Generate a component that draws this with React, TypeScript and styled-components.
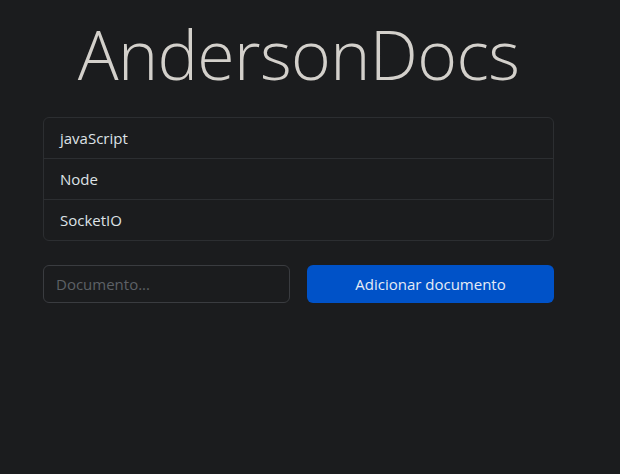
import React from 'react';
import styled, { createGlobalStyle } from 'styled-components';

const GlobalStyle = createGlobalStyle`
  html, body {
    margin: 0;
    padding: 0;
    background: #1b1c1e;
    color: #dee2e6;
    font-family: "Open Sans", "Noto Sans", sans-serif;
    font-size: 16px;
  }
`;

const Page = styled.main`
  width: 511px;
  margin-left: 43px;
  padding-top: 12px;
`;

const Title = styled.h1`
  margin: 0 0 21px;
  text-align: center;
  font-family: "Open Sans", "Noto Sans", sans-serif;
  font-weight: 300;
  font-size: 68px;
  line-height: 84px;
  color: #d3d0cb;
  letter-spacing: -0.6px;
`;

const List = styled.ul`
  list-style: none;
  margin: 0;
  padding: 0;
  border: 1px solid #2c2e31;
  border-radius: 6px;
  overflow: hidden;
`;

const Item = styled.li`
  height: 40px;
  display: flex;
  align-items: center;
  padding: 0 16px;
  font-size: 15px;
  color: #dee2e6;
  border-top: 1px solid #2c2e31;

  &:first-child {
    border-top: none;
  }
`;

const Form = styled.form`
  margin-top: 24px;
  display: grid;
  grid-template-columns: 247px 247px;
  justify-content: space-between;
`;

const Input = styled.input`
  box-sizing: border-box;
  height: 38px;
  padding: 0 12px;
  border: 1px solid #3a3c40;
  border-radius: 6px;
  background: #1b1c1e;
  color: #dee2e6;
  font-family: inherit;
  font-size: 15px;
  outline: none;

  &::placeholder {
    color: #5d6166;
  }
`;

const Button = styled.button`
  box-sizing: border-box;
  height: 38px;
  border: none;
  border-radius: 6px;
  background: #0052c8;
  color: #e6ebf5;
  font-family: inherit;
  font-size: 15px;
  cursor: pointer;
`;

const docs = ['javaScript', 'Node', 'SocketIO'];

export default function App() {
  return (
    <>
      <GlobalStyle />
      <Page>
        <Title>AndersonDocs</Title>
        <List>
          {docs.map((doc) => (
            <Item key={doc}>{doc}</Item>
          ))}
        </List>
        <Form onSubmit={(e) => e.preventDefault()}>
          <Input placeholder="Documento..." />
          <Button type="submit">Adicionar documento</Button>
        </Form>
      </Page>
    </>
  );
}
